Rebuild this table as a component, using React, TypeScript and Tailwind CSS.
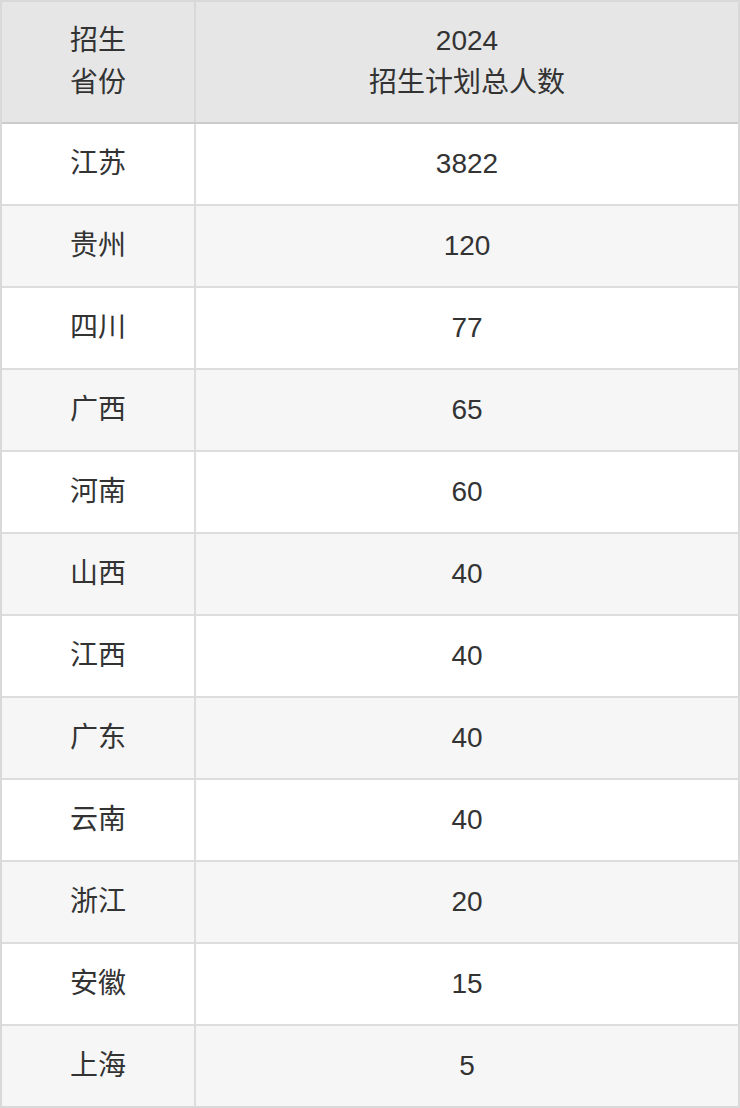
import React from "react";

const rows: [string, string][] = [
  ["江苏", "3822"],
  ["贵州", "120"],
  ["四川", "77"],
  ["广西", "65"],
  ["河南", "60"],
  ["山西", "40"],
  ["江西", "40"],
  ["广东", "40"],
  ["云南", "40"],
  ["浙江", "20"],
  ["安徽", "15"],
  ["上海", "5"],
];

const App: React.FC = () => {
  return (
    <div
      className="w-[740px] bg-white text-[#333333] text-[28px] leading-[42px]"
      style={{ fontFamily: '"Liberation Sans", "Noto Sans CJK SC", sans-serif' }}
    >
      <div className="border-2 border-[#d9d9d9]">
        {/* header */}
        <div className="flex h-[122px] bg-[#e6e6e6] border-b-2 border-[#cccccc]">
          <div className="w-[194px] shrink-0 border-r-2 border-[#d9d9d9] flex items-center justify-center text-center">
            招生
            <br />
            省份
          </div>
          <div className="flex-1 flex items-center justify-center text-center">
            2024
            <br />
            招生计划总人数
          </div>
        </div>

        {rows.map(([province, count], i) => (
          <div
            key={province}
            className={`flex ${i > 0 ? "h-[82px] border-t-2 border-[#dddddd]" : "h-[80px]"} ${
              i % 2 === 1 ? "bg-[#f6f6f6]" : "bg-white"
            }`}
          >
            <div className="w-[194px] shrink-0 border-r-2 border-[#dddddd] flex items-center justify-center">
              {province}
            </div>
            <div className="flex-1 flex items-center justify-center">{count}</div>
          </div>
        ))}
      </div>
    </div>
  );
};

export default App;
